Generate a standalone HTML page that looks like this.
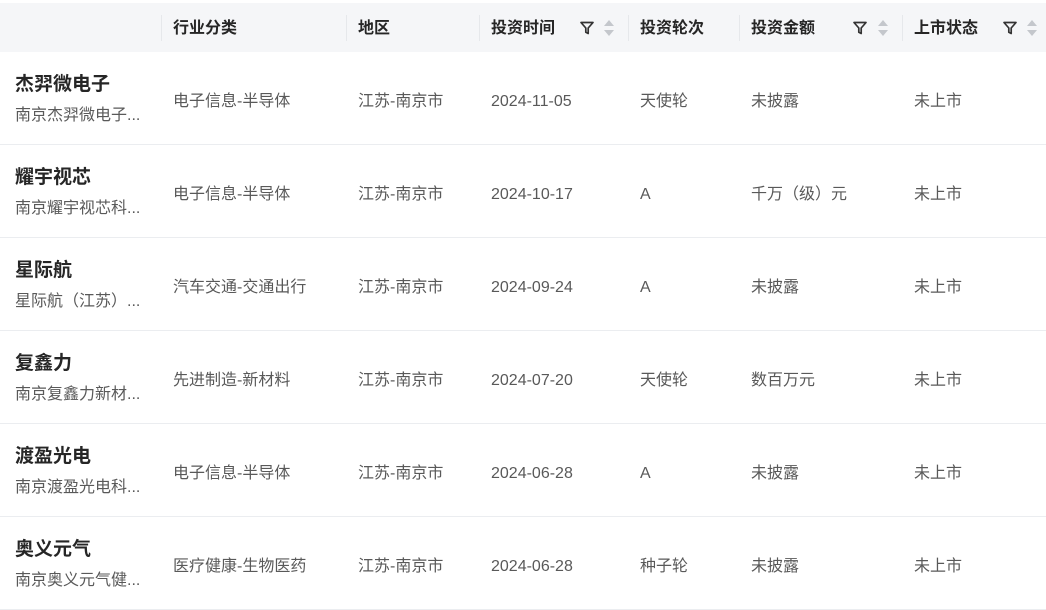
<!DOCTYPE html><html><head><meta charset="utf-8"><style>
body{margin:0;width:1046px;height:610px;background:#fff;font-family:"Liberation Sans","Noto Sans CJK SC",sans-serif;overflow:hidden;position:relative}
.hd{position:absolute;top:3px;left:0;width:1046px;height:49px;background:#f5f6f8}
.h{position:absolute;top:16px;font-size:16px;font-weight:bold;color:#262626;line-height:20px}
.sep{position:absolute;top:12px;width:1px;height:26px;background:#e6e8eb}
.row{position:absolute;left:0;width:1046px;height:92px;border-bottom:1px solid #ebedf0}
.c{position:absolute;top:40px;font-size:16px;color:#595959;line-height:20px}
.n{position:absolute;left:15px;top:21px;font-size:19px;font-weight:bold;color:#262626;line-height:24px}
.s{position:absolute;left:15px;top:54px;font-size:16px;color:#595959;line-height:20px}
svg{position:absolute}
</style></head><body>
<div class="hd">
<div class="sep" style="left:161px"></div><div class="h" style="left:173px">行业分类</div>
<div class="sep" style="left:346px"></div><div class="h" style="left:358px">地区</div>
<div class="sep" style="left:479px"></div><div class="h" style="left:491px">投资时间</div>
<div class="sep" style="left:628px"></div><div class="h" style="left:640px">投资轮次</div>
<div class="sep" style="left:739px"></div><div class="h" style="left:751px">投资金额</div>
<div class="sep" style="left:902px"></div><div class="h" style="left:914px">上市状态</div>
<svg style="left:579px;top:17px" width="16" height="16" viewBox="0 0 16 16"><path d="M2 2.5h12L9.2 8v5.5L6.8 12.3V8z" fill="none" stroke="#333" stroke-width="1.7" stroke-linejoin="round"/></svg>
<svg style="left:603px;top:15px" width="12" height="20" viewBox="0 0 12 20"><path d="M6 2l5 6H1zM6 18l5-6H1z" fill="#c4c7cc"/></svg>
<svg style="left:852px;top:17px" width="16" height="16" viewBox="0 0 16 16"><path d="M2 2.5h12L9.2 8v5.5L6.8 12.3V8z" fill="none" stroke="#333" stroke-width="1.7" stroke-linejoin="round"/></svg>
<svg style="left:877px;top:15px" width="12" height="20" viewBox="0 0 12 20"><path d="M6 2l5 6H1zM6 18l5-6H1z" fill="#c4c7cc"/></svg>
<svg style="left:1002px;top:17px" width="16" height="16" viewBox="0 0 16 16"><path d="M2 2.5h12L9.2 8v5.5L6.8 12.3V8z" fill="none" stroke="#333" stroke-width="1.7" stroke-linejoin="round"/></svg>
<svg style="left:1026px;top:15px" width="12" height="20" viewBox="0 0 12 20"><path d="M6 2l5 6H1zM6 18l5-6H1z" fill="#c4c7cc"/></svg>
</div>
<div class="row" style="top:52px"><div class="n">杰羿微电子</div><div class="s">南京杰羿微电子...</div><div class="c" style="left:173px">电子信息-半导体</div><div class="c" style="left:358px">江苏-南京市</div><div class="c" style="left:491px">2024-11-05</div><div class="c" style="left:640px">天使轮</div><div class="c" style="left:751px">未披露</div><div class="c" style="left:914px">未上市</div></div>
<div class="row" style="top:145px"><div class="n">耀宇视芯</div><div class="s">南京耀宇视芯科...</div><div class="c" style="left:173px">电子信息-半导体</div><div class="c" style="left:358px">江苏-南京市</div><div class="c" style="left:491px">2024-10-17</div><div class="c" style="left:640px">A</div><div class="c" style="left:751px">千万（级）元</div><div class="c" style="left:914px">未上市</div></div>
<div class="row" style="top:238px"><div class="n">星际航</div><div class="s">星际航（江苏）...</div><div class="c" style="left:173px">汽车交通-交通出行</div><div class="c" style="left:358px">江苏-南京市</div><div class="c" style="left:491px">2024-09-24</div><div class="c" style="left:640px">A</div><div class="c" style="left:751px">未披露</div><div class="c" style="left:914px">未上市</div></div>
<div class="row" style="top:331px"><div class="n">复鑫力</div><div class="s">南京复鑫力新材...</div><div class="c" style="left:173px">先进制造-新材料</div><div class="c" style="left:358px">江苏-南京市</div><div class="c" style="left:491px">2024-07-20</div><div class="c" style="left:640px">天使轮</div><div class="c" style="left:751px">数百万元</div><div class="c" style="left:914px">未上市</div></div>
<div class="row" style="top:424px"><div class="n">渡盈光电</div><div class="s">南京渡盈光电科...</div><div class="c" style="left:173px">电子信息-半导体</div><div class="c" style="left:358px">江苏-南京市</div><div class="c" style="left:491px">2024-06-28</div><div class="c" style="left:640px">A</div><div class="c" style="left:751px">未披露</div><div class="c" style="left:914px">未上市</div></div>
<div class="row" style="top:517px"><div class="n">奥义元气</div><div class="s">南京奥义元气健...</div><div class="c" style="left:173px">医疗健康-生物医药</div><div class="c" style="left:358px">江苏-南京市</div><div class="c" style="left:491px">2024-06-28</div><div class="c" style="left:640px">种子轮</div><div class="c" style="left:751px">未披露</div><div class="c" style="left:914px">未上市</div></div>
</body></html>
